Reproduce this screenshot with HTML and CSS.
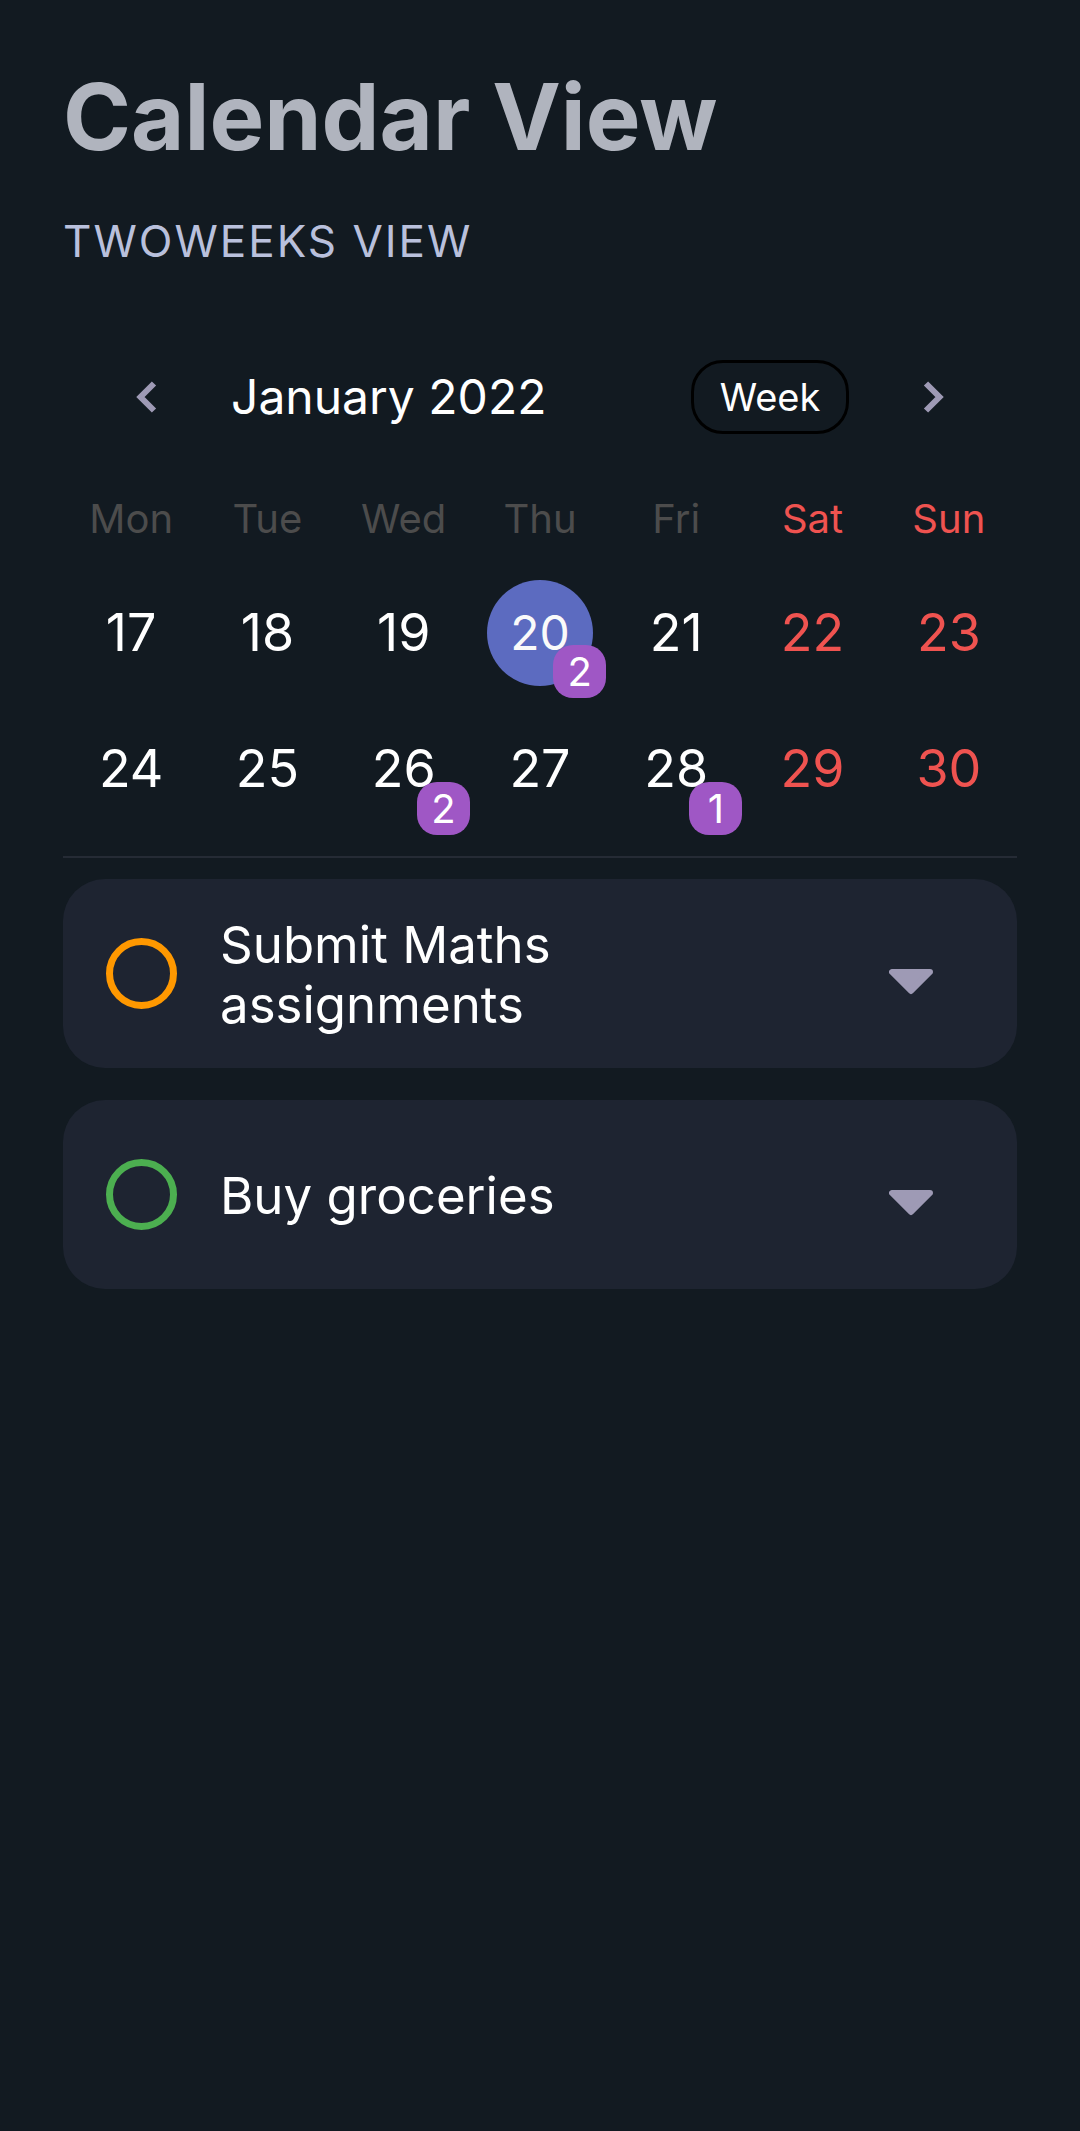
FILE: index.html
```html
<!DOCTYPE html>
<html lang="en">
<head>
<meta charset="utf-8">
<meta name="viewport" content="width=device-width, initial-scale=1">
<title>Calendar View</title>
<link rel="stylesheet" href="styles.css">
</head>
<body>
<main class="page">
  <h1 class="title">Calendar View</h1>
  <p class="subtitle">TWOWEEKS VIEW</p>

  <section class="calendar" aria-label="Calendar">
    <header class="toolbar">
      <button class="nav" type="button" aria-label="Previous"><svg width="21" height="32" viewBox="0 0 21 32"><path d="M18 2.500 4.500 16 18 29.500"/></svg></button>
      <h2 class="month">January 2022</h2>
      <button class="format" type="button">Week</button>
      <button class="nav" type="button" aria-label="Next"><svg width="21" height="32" viewBox="0 0 21 32"><path d="M3 2.500 16.500 16 3 29.500"/></svg></button>
    </header>
    <table class="days">
      <thead>
        <tr><th>Mon</th><th>Tue</th><th>Wed</th><th>Thu</th><th>Fri</th><th class="weekend">Sat</th><th class="weekend">Sun</th></tr>
      </thead>
      <tbody>
        <tr>
          <td><button class="day" type="button">17</button></td>
          <td><button class="day" type="button">18</button></td>
          <td><button class="day" type="button">19</button></td>
          <td><button class="day selected" type="button">20</button><span class="badge">2</span></td>
          <td><button class="day" type="button">21</button></td>
          <td class="weekend"><button class="day" type="button">22</button></td>
          <td class="weekend"><button class="day" type="button">23</button></td>
        </tr>
        <tr>
          <td><button class="day" type="button">24</button></td>
          <td><button class="day" type="button">25</button></td>
          <td><button class="day" type="button">26</button><span class="badge">2</span></td>
          <td><button class="day" type="button">27</button></td>
          <td><button class="day" type="button">28</button><span class="badge">1</span></td>
          <td class="weekend"><button class="day" type="button">29</button></td>
          <td class="weekend"><button class="day" type="button">30</button></td>
        </tr>
      </tbody>
    </table>
  </section>

  <ul class="tasks">
    <li class="task">
      <input class="check medium" type="checkbox" id="task-1">
      <label class="name" for="task-1">Submit Maths assignments</label>
      <button class="expand" type="button" aria-label="Show details"><svg width="44" height="26" viewBox="0 0 44 26"><path d="M3 3H41L22 22Z"/></svg></button>
    </li>
    <li class="task">
      <input class="check low" type="checkbox" id="task-2">
      <label class="name" for="task-2">Buy groceries</label>
      <button class="expand" type="button" aria-label="Show details"><svg width="44" height="26" viewBox="0 0 44 26"><path d="M3 3H41L22 22Z"/></svg></button>
    </li>
  </ul>
</main>
</body>
</html>
```
FILE: styles.css
```css
* {
  box-sizing: border-box;
}

body {
  margin: 0;
  min-height: 100vh;
  background: #121a21;
  color: #fff;
  font-family: Inter, Roboto, sans-serif;
}

button {
  padding: 0;
  border: 0;
  background: none;
  color: inherit;
  font: inherit;
}

svg {
  display: block;
}

.page {
  padding: 62px 63px;
}

.title {
  margin: 0;
  color: #b0b4be;
  font-size: 92px;
  font-weight: 700;
  line-height: 110px;
}

.subtitle {
  margin: 40px 0 0;
  color: #b9c0dc;
  font-size: 44px;
  line-height: 58px;
  letter-spacing: 2px;
}

.toolbar {
  display: flex;
  align-items: center;
  margin-top: 90px;
  padding: 0 73px;
}

.nav path {
  fill: none;
  stroke: #9e9ab5;
  stroke-width: 6;
}

.month {
  flex: 1;
  margin: 0 0 0 74px;
  font-size: 48px;
  font-weight: 400;
  line-height: 60px;
}

.format {
  min-width: 158px;
  margin-right: 74px;
  padding: 0 24px;
  border: 3px solid #000;
  border-radius: 32px;
  font-size: 38px;
  line-height: 68px;
}

.days {
  width: 100%;
  margin-top: 50px;
  border-collapse: collapse;
  border-bottom: 2px solid #252b35;
  table-layout: fixed;
}

.days th {
  height: 80px;
  padding: 0 0 12px;
  color: #4c4c4c;
  font-size: 40px;
  font-weight: 400;
}

.days td {
  position: relative;
  height: 137px;
  padding: 0;
  text-align: center;
}

.days tr:last-child td {
  height: 156px;
  padding-bottom: 20px;
}

.days .weekend {
  color: #ef5350;
}

.day {
  width: 106px;
  height: 106px;
  border-radius: 50%;
  font-size: 52px;
}

.selected {
  background: #5c6bc0;
  color: #fafafa;
  font-size: 48px;
}

.badge {
  position: absolute;
  top: 81px;
  right: 2px;
  width: 53px;
  border-radius: 20px;
  background: #9f57c5;
  font-size: 40px;
  line-height: 53px;
}

.tasks {
  display: grid;
  gap: 32px;
  margin: 21px 0 0;
  padding: 0;
  list-style: none;
}

.task {
  display: flex;
  align-items: center;
  gap: 43px;
  min-height: 189px;
  padding: 0 84px 0 43px;
  border-radius: 42px;
  background: #1e2431;
}

.check {
  flex: none;
  width: 71px;
  height: 71px;
  margin: 0;
  border: 7px solid;
  border-radius: 50%;
  appearance: none;
}

.medium {
  border-color: #ff9800;
}

.low {
  border-color: #4caf50;
}

.name {
  max-width: 400px;
  padding-top: 2px;
  font-size: 51px;
  line-height: 60px;
}

.expand {
  margin-left: auto;
  padding-top: 16px;
}

.expand path {
  fill: #9e9ab5;
  stroke: #9e9ab5;
  stroke-width: 6;
  stroke-linejoin: round;
}
```
